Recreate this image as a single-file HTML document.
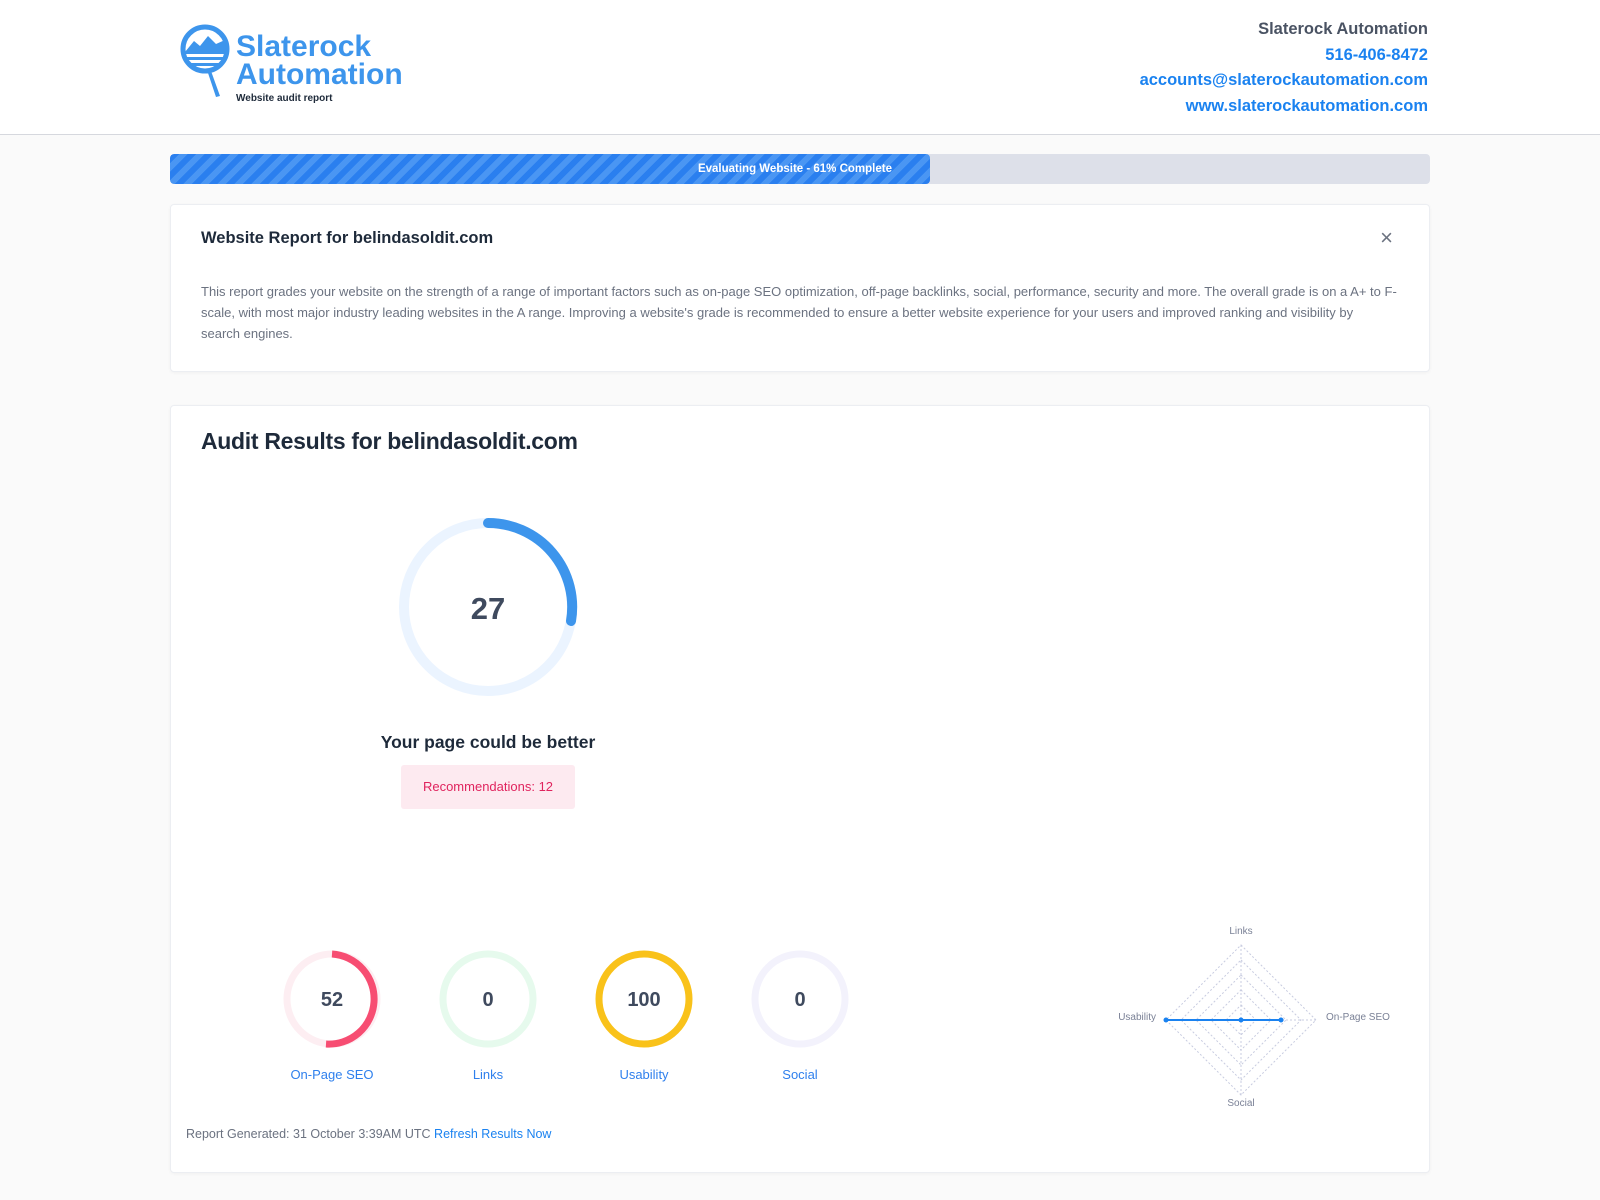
<!DOCTYPE html><html><head><style>
body{margin:0;background:#fafafa;font-family:"Liberation Sans",sans-serif;width:1600px;height:1200px;overflow:hidden;position:relative}
.hdr{position:absolute;left:0;top:0;width:1600px;height:134px;background:#fff;border-bottom:1px solid #d6d8de}
.card{position:absolute;background:#fff;border:1px solid #eceef2;border-radius:4px;box-shadow:0 1px 3px rgba(0,0,0,.04)}
.lab{position:absolute;color:#2f80ed;font-size:13px;text-align:center;width:120px}
</style></head><body>
<div class="hdr">
<svg style="position:absolute;left:180px;top:24px" width="56" height="78" viewBox="0 0 56 78">
<circle cx="25" cy="25" r="22" fill="none" stroke="#3d95ec" stroke-width="5"/>
<path d="M5 28 L14 17 L20 22 L28 12 L36 20 L45 16 L46 30 L5 30Z" fill="#3d95ec"/>
<rect x="5" y="33" width="40" height="3" fill="#3d95ec"/>
<rect x="10" y="39" width="30" height="3" fill="#3d95ec"/>
<path d="M31 47 L40 72 L36 73 L28 49Z" fill="#3d95ec"/>
</svg>
<div style="position:absolute;left:236px;top:33px;color:#3d95ec;font-weight:bold;font-size:30px;line-height:28px">Slaterock<br>Automation</div>
<div style="position:absolute;left:236px;top:93px;font-size:10px;font-weight:bold;color:#1e2a3a">Website audit report</div>
<div style="position:absolute;right:172px;top:17px;text-align:right;font-size:16.5px;line-height:25.5px;font-weight:bold">
<div style="color:#4a5363">Slaterock Automation</div>
<div style="color:#1a82f0">516-406-8472</div>
<div style="color:#1a82f0">accounts@slaterockautomation.com</div>
<div style="color:#1a82f0">www.slaterockautomation.com</div></div>
</div>
<div style="position:absolute;left:170px;top:154px;width:1260px;height:30px;background:#dde0e9;border-radius:4px;overflow:hidden">
<div style="width:760px;height:30px;background:repeating-linear-gradient(-45deg,#2a7fef 0 6px,#4a96f3 6px 12px);border-radius:4px;color:#fff;font-size:11.5px;font-weight:bold;line-height:30px;text-align:right;box-sizing:border-box;padding-right:38px">Evaluating Website - 61% Complete</div></div>
<div class="card" style="left:170px;top:204px;width:1258px;height:166px">
<div style="position:absolute;left:30px;top:24px;font-size:16.5px;font-weight:bold;color:#1e2a3a">Website Report for belindasoldit.com</div>
<div style="position:absolute;right:36px;top:20px;font-size:22px;color:#6b7280">×</div>
<div style="position:absolute;left:30px;top:76px;width:1220px;font-size:13px;line-height:21px;color:#6b7280;white-space:nowrap">This report grades your website on the strength of a range of important factors such as on-page SEO optimization, off-page backlinks, social, performance, security and more. The overall grade is on a A+ to F-<br>scale, with most major industry leading websites in the A range. Improving a website's grade is recommended to ensure a better website experience for your users and improved ranking and visibility by<br>search engines.</div></div>
<div class="card" style="left:170px;top:405px;width:1258px;height:766px">
<div style="position:absolute;left:30px;top:22px;font-size:23px;font-weight:bold;color:#1e2a3a;letter-spacing:-0.3px">Audit Results for belindasoldit.com</div></div>
<svg style="position:absolute;left:0;top:0" width="1600" height="1200">
<circle cx="488" cy="607" r="84" fill="none" stroke="#ebf4ff" stroke-width="10"/>
<path d="M488 523 A84 84 0 0 1 571 621" fill="none" stroke="#3d95ec" stroke-width="10" stroke-linecap="round"/>
<text x="488" y="619" text-anchor="middle" font-size="31" font-weight="bold" fill="#3f4a5e" font-family="Liberation Sans">27</text>
<g font-family="Liberation Sans" font-weight="bold" font-size="20" fill="#3f4a5e" text-anchor="middle">
<circle cx="332" cy="999" r="45" fill="none" stroke="#fdeef2" stroke-width="7"/>
<path d="M332 954 A45 45 0 1 1 326 1044" fill="none" stroke="#f74d72" stroke-width="7"/>
<text x="332" y="1006">52</text>
<circle cx="488" cy="999" r="45" fill="none" stroke="#e6faed" stroke-width="7"/><text x="488" y="1006">0</text>
<circle cx="644" cy="999" r="45" fill="none" stroke="#f9c21a" stroke-width="7"/><text x="644" y="1006">100</text>
<circle cx="800" cy="999" r="45" fill="none" stroke="#f3f2fc" stroke-width="7"/><text x="800" y="1006">0</text>
</g>
<g fill="none" stroke="#c8cce0" stroke-dasharray="2 2" stroke-width="1">
<path d="M1241 945 L1316 1020 L1241 1095 L1166 1020Z"/><path d="M1241 960 L1301 1020 L1241 1080 L1181 1020Z"/><path d="M1241 975 L1286 1020 L1241 1065 L1196 1020Z"/><path d="M1241 990 L1271 1020 L1241 1050 L1211 1020Z"/><path d="M1241 1005 L1256 1020 L1241 1035 L1226 1020Z"/>
<path d="M1241 945 V1095 M1166 1020 H1316"/></g>
<path d="M1166 1020 H1281" stroke="#1a82f0" stroke-width="2"/>
<circle cx="1166" cy="1020" r="2.5" fill="#1a82f0"/><circle cx="1241" cy="1020" r="2.5" fill="#1a82f0"/><circle cx="1281" cy="1020" r="2.5" fill="#1a82f0"/>
<g font-family="Liberation Sans" font-size="10" fill="#7a8196">
<text x="1241" y="934" text-anchor="middle">Links</text><text x="1241" y="1106" text-anchor="middle">Social</text>
<text x="1156" y="1020" text-anchor="end">Usability</text><text x="1326" y="1020">On-Page SEO</text></g>
</svg>
<div style="position:absolute;left:360px;top:732px;width:256px;text-align:center;font-size:17.5px;font-weight:bold;color:#1e2a3a">Your page could be better</div>
<div style="position:absolute;left:401px;top:765px;width:174px;height:44px;background:#fdeaf0;border-radius:3px;color:#e0245e;font-size:13px;line-height:44px;text-align:center">Recommendations: 12</div>
<div class="lab" style="left:272px;top:1067px">On-Page SEO</div>
<div class="lab" style="left:428px;top:1067px">Links</div>
<div class="lab" style="left:584px;top:1067px">Usability</div>
<div class="lab" style="left:740px;top:1067px">Social</div>
<div style="position:absolute;left:186px;top:1127px;font-size:12.5px;color:#6b7280">Report Generated: 31 October 3:39AM UTC <span style="color:#1a82f0">Refresh Results Now</span></div>
</body></html>
